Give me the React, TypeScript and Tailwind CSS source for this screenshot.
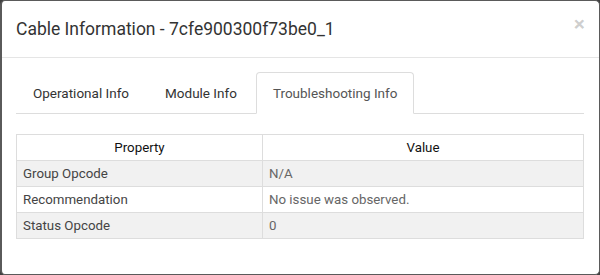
import React from "react";

const rows = [
  { p: "Group Opcode", v: "N/A", bg: "bg-[#f1f1f1]" },
  { p: "Recommendation", v: "No issue was observed.", bg: "bg-white" },
  { p: "Status Opcode", v: "0", bg: "bg-[#f1f1f1]" },
];

export default function App() {
  return (
    <div
      className="w-[600px] h-[275px] bg-[#3f3f3f]"
      style={{ fontFamily: "Roboto, 'Liberation Sans', sans-serif" }}
    >
      <div className="h-full bg-white rounded-[5px] border border-[#5a5a5a] border-l-2 flex flex-col">
        <div className="h-[57px] shrink-0 border-b border-[#e5e5e5] flex items-center justify-between pl-[14px] pr-[14px]">
          <div className="text-[17.5px] text-[#333] leading-none pt-[1px]">
            Cable Information - 7cfe900300f73be0_1
          </div>
          <div className="text-[21px] font-bold leading-none text-black/20 -mt-[9px]">×</div>
        </div>
        <div className="pl-[14px] pr-[15px] pt-[14px]">
          <div className="flex h-[42px] border-b border-[#ddd] text-[13.5px]">
            <div className="h-[42px] px-[16px] mr-[2px] flex items-center text-[#333] border border-transparent">
              Operational Info
            </div>
            <div className="h-[42px] px-[16px] mr-[2px] flex items-center text-[#333] border border-transparent">
              Module Info
            </div>
            <div className="h-[42px] px-[16px] flex items-center text-[#555] border border-[#ddd] border-b-white rounded-t-[4px] bg-white">
              Troubleshooting Info
            </div>
          </div>
          <table className="mt-[20px] w-full border-collapse text-[13.3px]">
            <thead>
              <tr className="h-[26px] bg-white">
                <th className="w-[246px] border border-[#ddd] font-normal text-[#111] text-center">Property</th>
                <th className="border border-[#ddd] font-normal text-[#111] text-center">Value</th>
              </tr>
            </thead>
            <tbody>
              {rows.map((r) => (
                <tr key={r.p} className={`h-[26px] ${r.bg}`}>
                  <td className="border border-[#ddd] px-[6px] text-[#444]">{r.p}</td>
                  <td className="border border-[#ddd] px-[6px] text-[#666]">{r.v}</td>
                </tr>
              ))}
            </tbody>
          </table>
        </div>
      </div>
    </div>
  );
}
